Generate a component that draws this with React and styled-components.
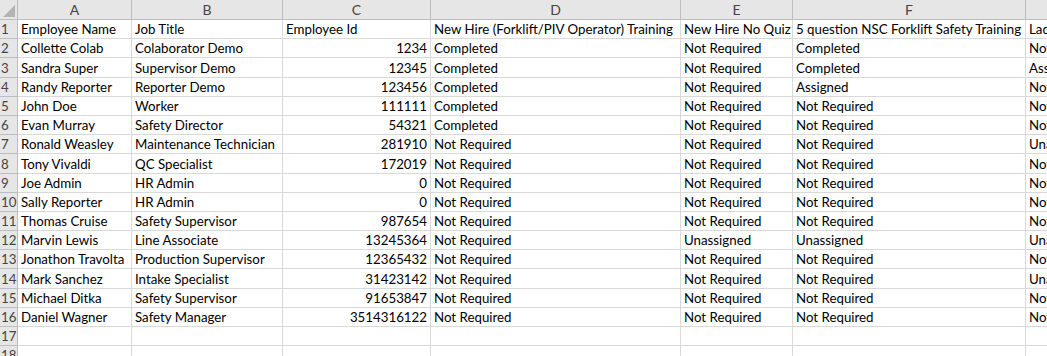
import React from "react";
import styled, { createGlobalStyle } from "styled-components";

const Global = createGlobalStyle`
  html, body { margin: 0; padding: 0; background: #ffffff; overflow: hidden; }
  body { font-family: Lato, "Liberation Sans", sans-serif; }
`;

const COLS = [18, 114, 151, 148, 250, 112, 233, 220];
const LETTERS = ["A", "B", "C", "D", "E", "F", "G"];

const Sheet = styled.div`
  display: grid;
  grid-template-columns: ${COLS.map((c) => c + "px").join(" ")};
  grid-template-rows: 20px;
  grid-auto-rows: 19.2px;
  width: 1047px;
  height: 356px;
  overflow: hidden;
  font-size: 13.3px;
  color: #000;
`;

const Corner = styled.div`
  position: relative;
  background: #e6e6e6;
  border-right: 1px solid #bdbdbd;
  border-bottom: 1px solid #bdbdbd;
  box-sizing: border-box;
  &::after {
    content: "";
    position: absolute;
    right: 2px;
    bottom: 2px;
    width: 0;
    height: 0;
    border-left: 12px solid transparent;
    border-bottom: 12px solid #b4b4b4;
  }
`;

const ColHead = styled.div`
  background: #e6e6e6;
  border-right: 1px solid #bdbdbd;
  border-bottom: 1px solid #bdbdbd;
  box-sizing: border-box;
  display: flex;
  align-items: center;
  justify-content: center;
  color: #444;
  font-size: 14px;
  white-space: nowrap;
  overflow: hidden;
`;

const RowHead = styled.div`
  background: #e6e6e6;
  border-right: 1px solid #bdbdbd;
  border-bottom: 1px solid #bdbdbd;
  box-sizing: border-box;
  display: flex;
  align-items: flex-end;
  padding: 0 0 0 1px;
  color: #444;
  font-size: 13.3px;
  line-height: 17px;
  white-space: nowrap;
  overflow: hidden;
`;

const Cell = styled.div`
  border-right: 1px solid #d9d9d9;
  border-bottom: 1px solid #d9d9d9;
  box-sizing: border-box;
  display: flex;
  align-items: flex-end;
  justify-content: ${(p) => (p.$num ? "flex-end" : "flex-start")};
  padding: 0 3px 0 3px;
  line-height: 17px;
  white-space: nowrap;
  overflow: hidden;
`;

const NR = "Not Required";
const rows = [
  ["Employee Name", "Job Title", "Employee Id", "New Hire (Forklift/PIV Operator) Training", "New Hire No Quiz", "5 question NSC Forklift Safety Training", "Ladder Safety Training"],
  ["Collette Colab", "Colaborator Demo", 1234, "Completed", NR, "Completed", NR],
  ["Sandra Super", "Supervisor Demo", 12345, "Completed", NR, "Completed", "Assigned"],
  ["Randy Reporter", "Reporter Demo", 123456, "Completed", NR, "Assigned", NR],
  ["John Doe", "Worker", 111111, "Completed", NR, NR, NR],
  ["Evan Murray", "Safety Director", 54321, "Completed", NR, NR, NR],
  ["Ronald Weasley", "Maintenance Technician", 281910, NR, NR, NR, "Unassigned"],
  ["Tony Vivaldi", "QC Specialist", 172019, NR, NR, NR, NR],
  ["Joe Admin", "HR Admin", 0, NR, NR, NR, NR],
  ["Sally Reporter", "HR Admin", 0, NR, NR, NR, NR],
  ["Thomas Cruise", "Safety Supervisor", 987654, NR, NR, NR, NR],
  ["Marvin Lewis", "Line Associate", 13245364, NR, "Unassigned", "Unassigned", "Unassigned"],
  ["Jonathon Travolta", "Production Supervisor", 12365432, NR, NR, NR, NR],
  ["Mark Sanchez", "Intake Specialist", 31423142, NR, NR, NR, "Unassigned"],
  ["Michael Ditka", "Safety Supervisor", 91653847, NR, NR, NR, NR],
  ["Daniel Wagner", "Safety Manager", 3514316122, NR, NR, NR, NR],
  ["", "", "", "", "", "", ""],
  ["", "", "", "", "", "", ""],
];

export default function App() {
  return (
    <>
      <Global />
      <Sheet>
        <Corner />
        {LETTERS.map((l) => (
          <ColHead key={l}>{l}</ColHead>
        ))}
        {rows.map((r, i) => (
          <React.Fragment key={i}>
            <RowHead>{i + 1}</RowHead>
            {r.map((v, j) => (
              <Cell key={j} $num={typeof v === "number"}>
                {v}
              </Cell>
            ))}
          </React.Fragment>
        ))}
      </Sheet>
    </>
  );
}
